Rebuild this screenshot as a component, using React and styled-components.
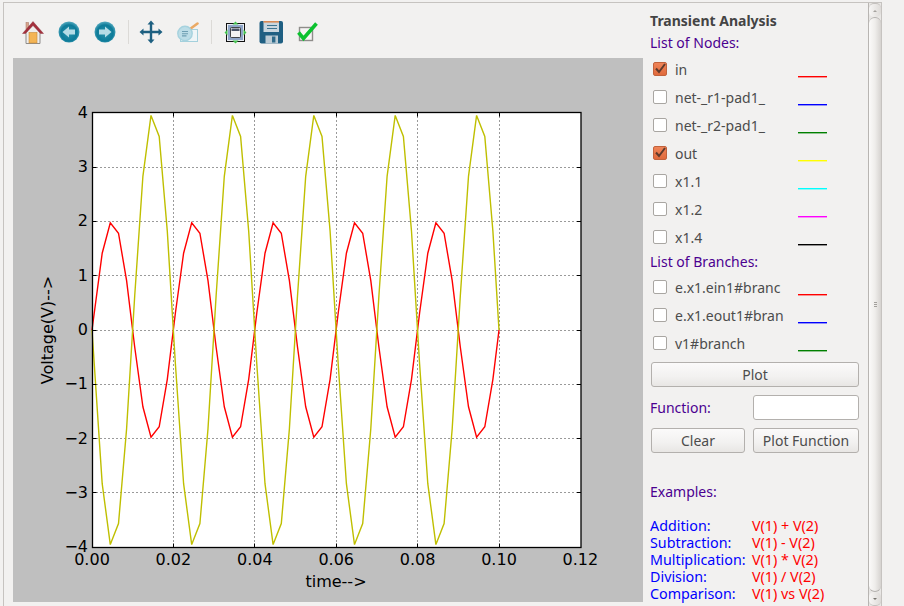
import React from 'react';
import styled, { createGlobalStyle } from 'styled-components';

const GlobalStyle = createGlobalStyle`
  html, body {
    margin: 0;
    padding: 0;
    background: #f2f1f0;
  }
`;

const Page = styled.div`
  width: 904px;
  height: 606px;
  box-sizing: border-box;
  padding: 2px 22px 0 3px;
  overflow: hidden;
  font-family: "Noto Sans", "Open Sans", sans-serif;
  font-size: 14px;
  color: #4c4c4c;
`;

const Frame = styled.div`
  display: flex;
  height: 100%;
  box-sizing: border-box;
  border: 1px solid #c6c3c0;
  border-bottom: none;
`;

const PlotColumn = styled.div`
  width: 639px;
  flex: none;
  box-sizing: border-box;
  padding-left: 9px;
`;

const Toolbar = styled.div`
  display: flex;
  align-items: center;
  height: 55px;
  padding: 2px 0 0 2px;
  box-sizing: border-box;
`;

const ToolIcon = styled.svg`
  width: 24px;
  height: 24px;
  margin: 0 6px;
  flex: none;
`;

const ToolSeparator = styled.div`
  width: 1px;
  height: 24px;
  margin: 0 ${p => p.$right}px 0 ${p => p.$left}px;
  background: #dcdad7;
`;

const Canvas = styled.div`
  width: 630px;
  height: 544px;
  background: #bfbfbf;
`;

const PlotSvg = styled.svg`
  display: block;
  font-family: "DejaVu Sans", sans-serif;
  font-size: 16px;
`;

const SidePanel = styled.div`
  flex: 1;
  display: flex;
  min-width: 0;
`;

const Controls = styled.div`
  flex: 1;
  min-width: 0;
  padding: 9px 0 0 7px;
`;

const Title = styled.div`
  font-weight: 700;
  height: 18px;
  line-height: 18px;
  color: #444;
`;

const SectionLabel = styled.div`
  height: 18px;
  line-height: 18px;
  margin: ${p => p.$top}px 0 ${p => p.$bottom}px;
  color: #4b0090;
`;

const SignalRow = styled.div`
  display: flex;
  align-items: center;
  height: 28px;
  padding-left: 3px;
`;

const Box = styled.span`
  width: 12px;
  height: 12px;
  flex: none;
  display: flex;
  align-items: center;
  justify-content: center;
  border: 1px solid ${p => (p.$checked ? '#c2623c' : '#a9a6a2')};
  border-radius: 2px;
  background: ${p => (p.$checked ? 'linear-gradient(#ef8458, #e06a3c)' : '#fff')};
`;

const SignalName = styled.span`
  width: 123px;
  margin-left: 8px;
  white-space: nowrap;
  flex: none;
`;

const Swatch = styled.span`
  width: 29px;
  height: 1px;
  flex: none;
  align-self: flex-end;
  margin-bottom: 6px;
  background: ${p => p.$color};
  box-shadow: 0 1px 0 ${p => p.$color}66;
`;

const Button = styled.button`
  display: block;
  width: ${p => p.$width}px;
  height: 25px;
  padding: 0;
  border: 1px solid #b3b0ad;
  border-radius: 3px;
  background: linear-gradient(#fbfafa, #f2f1f0 60%, #e8e6e4);
  font: inherit;
  color: #4c4c4c;
`;

const PlotButton = styled(Button)`
  margin: 5px 0 0 1px;
`;

const FunctionRow = styled.div`
  display: flex;
  align-items: center;
  justify-content: space-between;
  height: 25px;
  margin-top: 8px;
  width: 209px;
  color: #4b0090;
`;

const FunctionInput = styled.input`
  width: 106px;
  height: 25px;
  box-sizing: border-box;
  border: 1px solid #b3b0ad;
  border-radius: 3px;
  background: #fff;
  flex: none;
`;

const ButtonRow = styled.div`
  display: flex;
  gap: 8px;
  margin: 8px 0 0 1px;
`;

const ExampleGrid = styled.div`
  display: grid;
  grid-template-columns: 102px auto;
  grid-auto-rows: 17px;
  line-height: 17px;
  margin-top: 16px;
  white-space: nowrap;
  font-size: 14.3px;
`;

const ExampleName = styled.span`
  color: #0000ff;
`;

const ExampleFormula = styled.span`
  color: #ff0000;
`;

const Scrollbar = styled.div`
  width: 12px;
  flex: none;
  display: flex;
  flex-direction: column;
  border-left: 1px solid #b8b5b2;
  background: #e9e7e5;
`;

const ScrollArrow = styled.div`
  height: 13px;
  flex: none;
  display: flex;
  align-items: center;
  justify-content: center;
  border-radius: 5px;
  background: linear-gradient(90deg, #f7f6f5, #dedbd8);
  border: 1px solid #c4c1be;
  border-width: ${p => (p.$down ? '0 0 1px' : '1px 0 0')};
  &::after {
    content: '';
    border: 2.5px solid transparent;
    border-top-color: ${p => (p.$down ? '#77746f' : 'transparent')};
    border-bottom-color: ${p => (p.$down ? 'transparent' : '#a5a29e')};
    transform: translateY(${p => (p.$down ? 1 : -1)}px);
  }
`;

const ScrollThumb = styled.div`
  flex: 1;
  display: flex;
  flex-direction: column;
  align-items: center;
  justify-content: center;
  gap: 1px;
  border: 1px solid #b3b0ad;
  border-width: 1px 0;
  border-radius: 6px;
  background: linear-gradient(90deg, #fbfaf9, #efedeb 50%, #d6d3d0);
`;

const GripDot = styled.span`
  width: 3px;
  height: 1px;
  background: #a3a09c;
`;

const nodes = [
  { name: 'in', color: '#ff0000', checked: true },
  { name: 'net-_r1-pad1_', color: '#0000ff' },
  { name: 'net-_r2-pad1_', color: '#008000' },
  { name: 'out', color: '#ffff00', checked: true },
  { name: 'x1.1', color: '#00ffff' },
  { name: 'x1.2', color: '#ff00ff' },
  { name: 'x1.4', color: '#000000' },
];

const branches = [
  { name: 'e.x1.ein1#branc', color: '#ff0000' },
  { name: 'e.x1.eout1#bran', color: '#0000ff' },
  { name: 'v1#branch', color: '#008000' },
];

const examples = [
  ['Addition:', 'V(1) + V(2)'],
  ['Subtraction:', 'V(1) - V(2)'],
  ['Multiplication:', 'V(1) * V(2)'],
  ['Division:', 'V(1) / V(2)'],
  ['Comparison:', 'V(1) vs V(2)'],
];

// plot geometry, in canvas pixels
const X0 = 79;
const XSCALE = 4070;
const Y0 = 272;
const YSCALE = 54.33;
const LEFT = 79.5;
const RIGHT = 568;
const TOP = 54.5;
const BOTTOM = 489.5;

const px = t => X0 + t * XSCALE;
const py = v => Y0 - v * YSCALE;
const snap = n => Math.floor(n) + 0.5;

const times = [0];
for (let k = 0; k <= 48; k++) times.push(0.0025 + 0.002 * k);
times.push(0.1);

const wave = amp =>
  times
    .map(t => `${px(t).toFixed(1)},${py(amp * Math.sin(2 * Math.PI * 50 * t)).toFixed(1)}`)
    .join(' ');

const xTicks = [0, 0.02, 0.04, 0.06, 0.08, 0.1, 0.12];
const yTicks = [4, 3, 2, 1, 0, -1, -2, -3, -4];

const Chart = () => (
  <PlotSvg width="630" height="544" viewBox="0 0 630 544">
    <rect x={LEFT} y={TOP} width={RIGHT - LEFT} height={BOTTOM - TOP} fill="#fff" />
    {xTicks.slice(1, -1).map(t => (
      <line key={t} x1={snap(px(t))} x2={snap(px(t))} y1={TOP} y2={BOTTOM} stroke="#000" strokeWidth="0.8" strokeDasharray="1 3" />
    ))}
    {yTicks.slice(1, -1).map(v => (
      <line key={v} x1={LEFT} x2={RIGHT} y1={snap(py(v))} y2={snap(py(v))} stroke="#000" strokeWidth="0.8" strokeDasharray="1 3" />
    ))}
    <polyline points={wave(2)} fill="none" stroke="#ff0000" strokeWidth="1.4" />
    <polyline points={wave(-4)} fill="none" stroke="#bfbf00" strokeWidth="1.4" />
    {xTicks.slice(1, -1).map(t => (
      <g key={t} stroke="#000" strokeWidth="1">
        <line x1={snap(px(t))} x2={snap(px(t))} y1={TOP} y2={TOP + 4} />
        <line x1={snap(px(t))} x2={snap(px(t))} y1={BOTTOM} y2={BOTTOM - 4} />
      </g>
    ))}
    {yTicks.slice(1, -1).map(v => (
      <g key={v} stroke="#000" strokeWidth="1">
        <line x1={LEFT} x2={LEFT + 4} y1={snap(py(v))} y2={snap(py(v))} />
        <line x1={RIGHT} x2={RIGHT - 4} y1={snap(py(v))} y2={snap(py(v))} />
      </g>
    ))}
    <rect x={LEFT} y={TOP} width={RIGHT - LEFT} height={BOTTOM - TOP} fill="none" stroke="#000" strokeWidth="1.3" />
    {xTicks.map(t => (
      <text key={t} x={px(t)} y={507} textAnchor="middle">{t.toFixed(2)}</text>
    ))}
    {yTicks.map(v => (
      <text key={v} x={75} y={py(v) + 5} textAnchor="end">{v < 0 ? `\u2212${-v}` : v}</text>
    ))}
    <text x={323} y={529} textAnchor="middle">time--&gt;</text>
    <text transform="translate(39.5 272) rotate(-90)" textAnchor="middle">Voltage(V)--&gt;</text>
  </PlotSvg>
);

const HomeIcon = () => (
  <ToolIcon viewBox="0 0 24 24">
    <rect x="5" y="2.5" width="2.6" height="7" fill="#d8a48e" stroke="#a67560" strokeWidth="0.5" />
    <path d="M5 12.5 L12 3.5 L19 12.5 V23.5 H5 Z" fill="#efeeec" stroke="#8e8c8a" strokeWidth="1" />
    <rect x="8" y="12.5" width="8" height="10.5" fill="#f4b555" stroke="#c98a3a" strokeWidth="0.6" />
    <path d="M1.5 13.5 L12 1.5 L22.5 13.5 L19.5 13.5 L12 5.5 L4.5 13.5 Z" fill="#a3303c" stroke="#862430" strokeWidth="0.4" />
  </ToolIcon>
);

const NavIcon = ({ id, flip }) => (
  <ToolIcon viewBox="0 0 24 24">
    <defs>
      <radialGradient id={id} cx="50%" cy="55%" r="55%">
        <stop offset="0%" stopColor="#2a93ac" />
        <stop offset="70%" stopColor="#0d7b99" />
        <stop offset="100%" stopColor="#57abc0" />
      </radialGradient>
    </defs>
    <circle cx="12" cy="12" r="10.5" fill={`url(#${id})`} />
    <path
      d="M5.5 12 L12 6.5 V9.5 H18 V14.5 H12 V17.5 Z"
      fill="#b5dce6"
      transform={flip ? 'rotate(180 12 12)' : undefined}
    />
  </ToolIcon>
);

const MoveIcon = () => (
  <ToolIcon viewBox="0 0 24 24">
    <path
      d="M12 .5 L15.5 4.5 H13.2 V10.8 H19.5 V8.5 L23.5 12 L19.5 15.5 V13.2 H13.2 V19.5 H15.5 L12 23.5 L8.5 19.5 H10.8 V13.2 H4.5 V15.5 L.5 12 L4.5 8.5 V10.8 H10.8 V4.5 H8.5 Z"
      fill="#1d5f80"
    />
  </ToolIcon>
);

const ZoomIcon = () => (
  <ToolIcon viewBox="0 0 24 24">
    <rect x="5.5" y="9.5" width="17" height="12" fill="#eef5f7" stroke="#a4d0dc" strokeWidth="1" />
    <path d="M15 9 L22.5 3.5" stroke="#eaa964" strokeWidth="2.6" strokeLinecap="round" />
    <circle cx="10" cy="13.5" r="7.2" fill="#bcdde7" stroke="#a6d2de" strokeWidth="1.4" />
    <path d="M7 11.5 H13 M7 13.7 H13 M7 15.9 H11.5" stroke="#6e9fb3" strokeWidth="1.1" />
  </ToolIcon>
);

const SubplotsIcon = () => (
  <ToolIcon viewBox="0 0 24 24">
    <rect x="3.5" y="3.5" width="18" height="18" fill="#e8ecf2" stroke="#111" strokeWidth="1" />
    <rect x="5" y="5" width="15" height="15" fill="#8fa6c9" />
    <rect x="7.5" y="7.5" width="10" height="10" rx="1" fill="#f3f3f3" stroke="#222" strokeWidth="0.8" />
    <rect x="8.5" y="8.5" width="8" height="2.5" fill="#4a5568" />
    <path d="M12.5 1.5 L15.5 4.5 H9.5 Z M12.5 23.5 L15.5 20.5 H9.5 Z M1.5 12.5 L4.5 9.5 V15.5 Z M23.5 12.5 L20.5 9.5 V15.5 Z" fill="#45c250" />
  </ToolIcon>
);

const SaveIcon = () => (
  <ToolIcon viewBox="0 0 24 24">
    <rect x="0.5" y="1" width="23.5" height="22.5" rx="2" fill="#1f5f82" />
    <rect x="4.5" y="1" width="15.5" height="11" fill="#c9d6de" />
    <rect x="4.5" y="1" width="15.5" height="1.6" fill="#d98a55" />
    <path d="M8 5.5 H18 M8 8.5 H18" stroke="#3d7490" strokeWidth="1.2" />
    <rect x="6.5" y="15.5" width="12.5" height="8" fill="#bccbd4" />
    <rect x="13" y="16.5" width="3.4" height="6" fill="#2d6a8a" />
  </ToolIcon>
);

const EditIcon = () => (
  <ToolIcon viewBox="0 0 24 24">
    <rect x="4.5" y="7.5" width="13" height="13" fill="#f6f5f4" stroke="#8f8d8a" strokeWidth="1.4" />
    <path d="M3.5 12.5 L8.5 18.5 L21.5 3.5" fill="none" stroke="#0cc22f" strokeWidth="3.6" />
  </ToolIcon>
);

const CheckMark = () => (
  <svg width="12" height="12" viewBox="0 0 12 12">
    <path d="M2 5.5 L5 9 L11 1" fill="none" stroke="#5f3a2c" strokeWidth="2" />
  </svg>
);

const Signal = ({ name, color, checked }) => (
  <SignalRow>
    <Box $checked={checked}>{checked && <CheckMark />}</Box>
    <SignalName>{name}</SignalName>
    <Swatch $color={color} />
  </SignalRow>
);

const App = () => (
  <Page>
    <GlobalStyle />
    <Frame>
      <PlotColumn>
        <Toolbar>
          <HomeIcon />
          <NavIcon id="navBack" />
          <NavIcon id="navForward" flip />
          <ToolSeparator $left={5} $right={4} />
          <MoveIcon />
          <ZoomIcon />
          <ToolSeparator $left={6} $right={5} />
          <SubplotsIcon />
          <SaveIcon />
          <EditIcon />
        </Toolbar>
        <Canvas>
          <Chart />
        </Canvas>
      </PlotColumn>
      <SidePanel>
        <Controls>
          <Title>Transient Analysis</Title>
          <SectionLabel $top={4} $bottom={3}>List of Nodes:</SectionLabel>
          {nodes.map(n => <Signal key={n.name} {...n} />)}
          <SectionLabel $top={2} $bottom={2}>List of Branches:</SectionLabel>
          {branches.map(b => <Signal key={b.name} {...b} />)}
          <PlotButton $width={208}>Plot</PlotButton>
          <FunctionRow>
            <span>Function:</span>
            <FunctionInput />
          </FunctionRow>
          <ButtonRow>
            <Button $width={94}>Clear</Button>
            <Button $width={106}>Plot Function</Button>
          </ButtonRow>
          <SectionLabel $top={30} $bottom={0}>Examples:</SectionLabel>
          <ExampleGrid>
            {examples.map(([name, formula]) => (
              <React.Fragment key={name}>
                <ExampleName>{name}</ExampleName>
                <ExampleFormula>{formula}</ExampleFormula>
              </React.Fragment>
            ))}
          </ExampleGrid>
        </Controls>
        <Scrollbar>
          <ScrollArrow />
          <ScrollThumb>
            <GripDot />
            <GripDot />
            <GripDot />
          </ScrollThumb>
          <ScrollArrow $down />
        </Scrollbar>
      </SidePanel>
    </Frame>
  </Page>
);

export default App;
